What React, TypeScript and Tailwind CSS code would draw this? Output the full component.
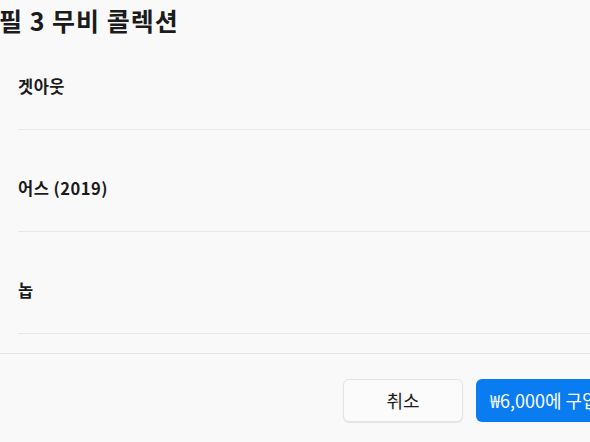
export default function App() {
  const movies = ['겟아웃', '어스 (2019)', '놉'];

  return (
    <div
      className="w-[590px] h-[442px] overflow-hidden bg-[#f9f9f9] text-[#1b1b1b] flex flex-col"
      style={{ fontFamily: '"Noto Sans CJK KR", "Noto Sans", sans-serif' }}
    >
      <div className="h-[28px] flex items-center -ml-[1px] pt-[12px]">
        <h1 className="text-[25px] font-bold leading-none tracking-[1px] whitespace-nowrap">필 3 무비 콜렉션</h1>
      </div>

      <ul className="pl-[18px] flex flex-col">
        {movies.map((m) => (
          <li key={m} className="h-[102px] flex items-center pt-[16px] border-b border-[#e8e8e8]">
            <span className="text-[16.5px] font-semibold tracking-[0.5px]">{m}</span>
          </li>
        ))}
      </ul>

      <div className="mt-[19px] border-t border-[#e5e5e5] flex-1 flex items-start justify-end gap-[13px] pt-[25px] -mr-[40px]">
        <button className="w-[120px] h-[43px] rounded-[6px] bg-[#fbfbfb] border border-[#e3e3e3] shadow-[0_1px_1px_rgba(0,0,0,0.08)] text-[18px] text-[#1b1b1b]">
          취소
        </button>
        <button className="w-[154px] h-[43px] rounded-[6px] bg-[#0a7cf2] text-white text-[18px] text-left pl-[14px] whitespace-nowrap overflow-hidden">
          ₩6,000에 구입
        </button>
      </div>
    </div>
  );
}
